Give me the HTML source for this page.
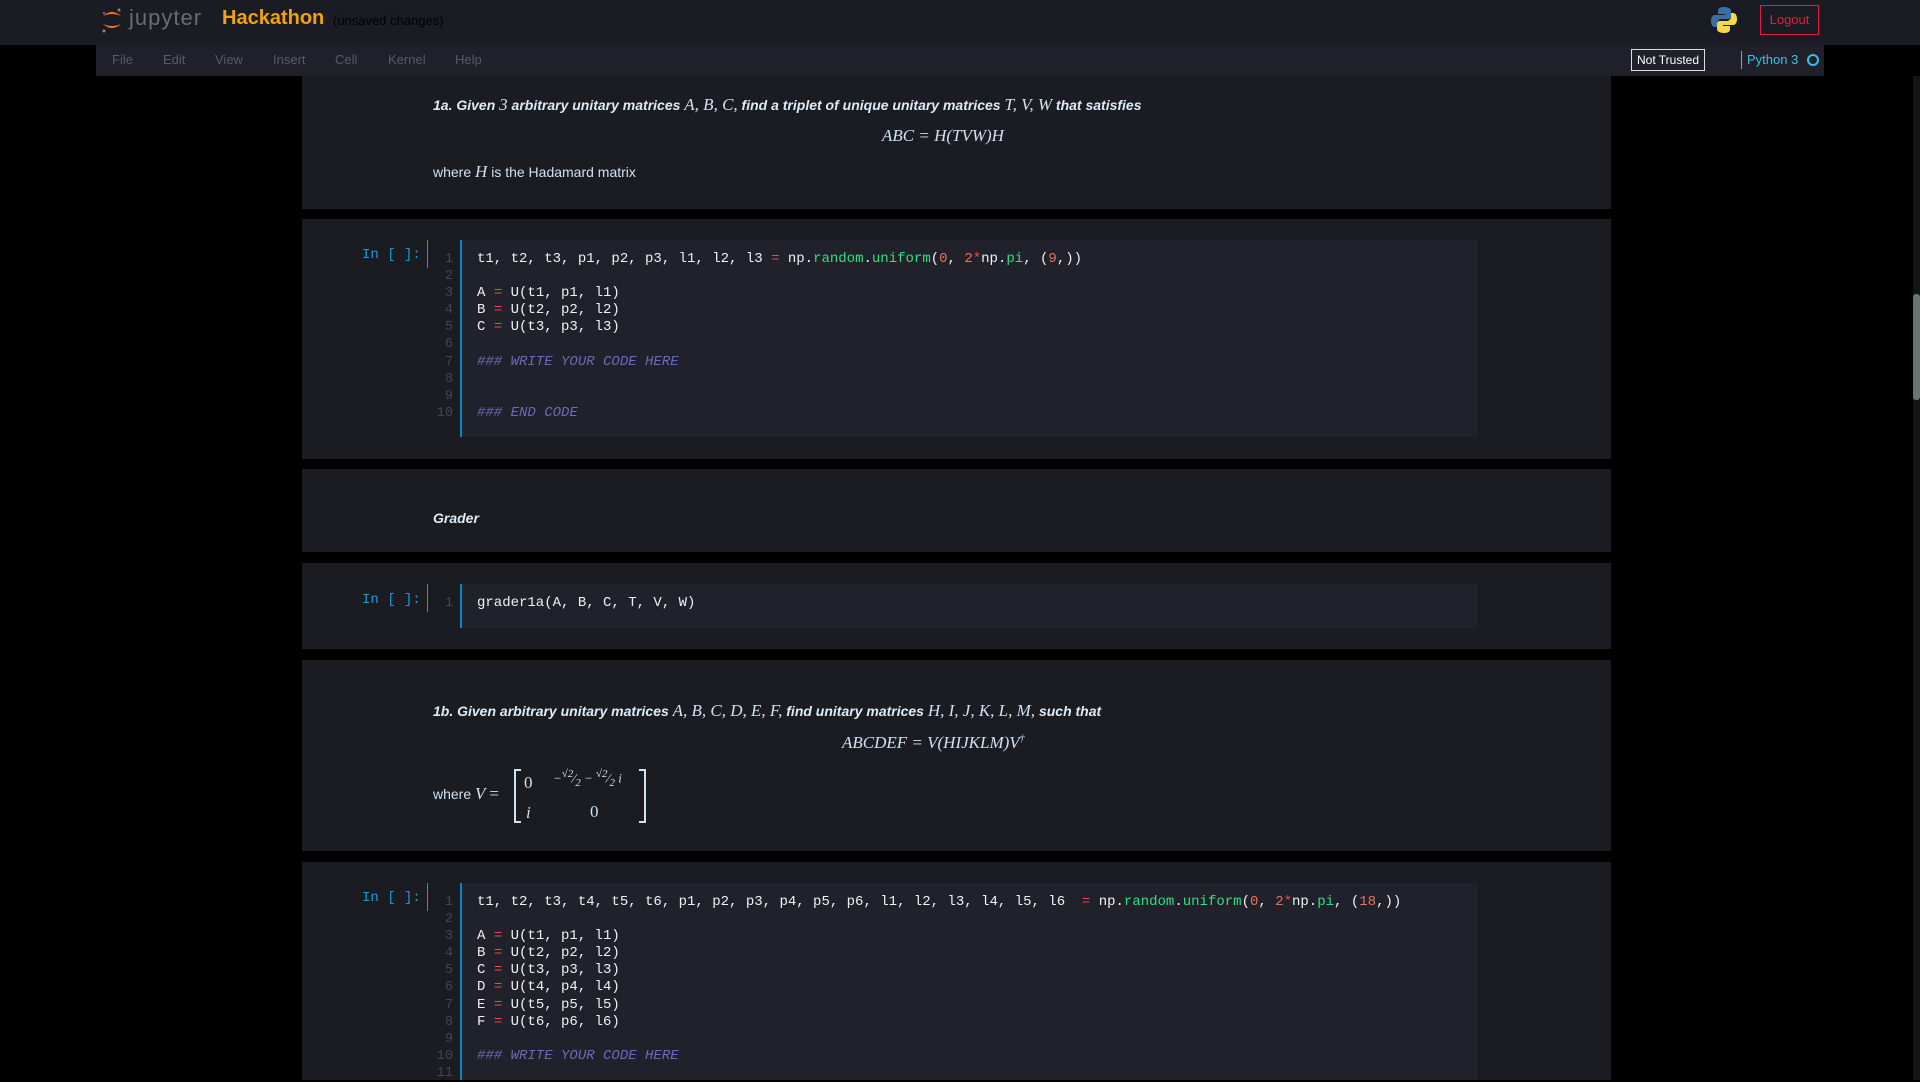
<!DOCTYPE html>
<html><head><meta charset="utf-8"><style>
*{margin:0;padding:0;box-sizing:border-box}
body{width:1920px;height:1080px;background:#000;overflow:hidden;position:relative;font-family:"Liberation Sans",sans-serif;color:#cfe2f3}
.abs{position:absolute}
#top{left:0;top:0;width:1920px;height:45px;background:#1b1b23}
#menu{left:96px;top:45px;width:1728px;height:31px;background:#20202a}
#menu span{position:absolute;top:7px;font-size:13px;color:#5a5a66}
.cell{position:absolute;left:302px;width:1309px;background:#1b1b22}
.md{position:absolute;left:433px;font-size:14px;white-space:nowrap}
.bi{font-weight:bold;font-style:italic;color:#dcebf8}
.m{font-family:"Liberation Serif",serif;font-style:italic;font-size:17px;color:#cfe2f3;font-weight:normal}
.code{position:absolute;left:460px;width:1018px;background:#21212b;border-left:2px solid #0d86c0}
.prompt{position:absolute;left:362px;font-family:"Liberation Mono",monospace;font-size:14px;color:#1a9bd7}
.pbar{position:absolute;left:427px;width:1px;background:#1a9bd7}
pre{position:absolute;font-family:"Liberation Mono",monospace;font-size:14px;line-height:17.1px;color:#f1f1f1}
.ln{color:#444456;text-align:right;width:20px;font-size:13.6px}
.o{color:#f0474c}.g{color:#2ee07e}.n{color:#e7735e}.c{color:#6a6ab8;font-style:italic}
</style></head><body>
<div id="top" class="abs"></div>
<svg class="abs" style="left:100px;top:6px" width="24" height="28" viewBox="0 0 24 28"><path d="M3 10 Q12 2 21 10 Q12 6 3 10Z" fill="#f37726"/><path d="M3 18 Q12 26 21 18 Q12 22 3 18Z" fill="#f37726"/><circle cx="19" cy="4" r="1.5" fill="#888"/><circle cx="4" cy="25" r="1.5" fill="#888"/><circle cx="4" cy="7" r="1" fill="#888"/></svg>
<div class="abs" style="left:129px;top:5px;font-size:22px;color:#6b6b72;letter-spacing:1px">jupyter</div>
<div class="abs" style="left:222px;top:7px;font-size:20px;font-weight:bold;color:#f0a30a">Hackathon</div>
<div class="abs" style="left:333px;top:13px;font-size:13px;color:#000">(unsaved changes)</div>
<svg class="abs" style="left:1709px;top:5px" width="30" height="30" viewBox="0 0 30 30"><path d="M15 2c-6 0-6 3-6 4v3h7v1H6c-3 0-4 3-4 6s1 6 4 6h2v-4c0-2 2-4 4-4h7c2 0 3-1 3-3V6c0-2-2-4-7-4z" fill="#3a6ea5"/><path d="M15 28c6 0 6-3 6-4v-3h-7v-1h10c3 0 4-3 4-6s-1-6-4-6h-2v4c0 2-2 4-4 4h-7c-2 0-3 1-3 3v5c0 2 2 4 7 4z" fill="#f5d849"/></svg>
<div class="abs" style="left:1760px;top:5px;width:59px;height:30px;border:1px solid #e0203c;color:#e0203c;font-size:13px;text-align:center;line-height:28px">Logout</div>
<div id="menu" class="abs"><span style="left:16px">File</span><span style="left:67px">Edit</span><span style="left:119px">View</span><span style="left:177px">Insert</span><span style="left:239px">Cell</span><span style="left:292px">Kernel</span><span style="left:359px">Help</span></div>
<div class="abs" style="left:1631px;top:49px;width:74px;height:22px;border:1px solid #ddd;color:#fff;font-size:12px;text-align:center;line-height:20px">Not Trusted</div>
<div class="abs" style="left:1741px;top:51px;width:1px;height:18px;background:#36c0e8"></div>
<div class="abs" style="left:1747px;top:52px;font-size:13px;color:#36c0e8">Python 3</div>
<div class="abs" style="left:1807px;top:54px;width:12px;height:12px;border:2px solid #36c0e8;border-radius:50%"></div>
<div class="abs" style="left:1913px;top:76px;width:7px;height:1004px;background:#141414"></div>
<div class="abs" style="left:1913px;top:294px;width:7px;height:106px;background:#6b7475;border-radius:3px"></div>

<div class="cell" style="top:76px;height:133px"></div>
<div class="md bi" style="top:95px">1a. Given <span class="m">3</span> arbitrary unitary matrices <span class="m">A, B, C,</span> find a triplet of unique unitary matrices <span class="m">T, V, W</span> that satisfies</div>
<div class="md m" style="top:126px;left:882px">ABC = H(TVW)H</div>
<div class="md" style="top:162px">where <span class="m">H</span> is the Hadamard matrix</div>

<div class="cell" style="top:219px;height:240px"></div>
<div class="prompt" style="top:247px">In [ ]:</div><div class="pbar" style="top:240px;height:28px"></div>
<div class="code" style="top:240px;height:197px"></div>
<pre class="ln" style="left:433px;top:251px">1
2
3
4
5
6
7
8
9
10</pre>
<pre style="left:477px;top:251px">t1, t2, t3, p1, p2, p3, l1, l2, l3 <span class="o">=</span> np.<span class="g">random</span>.<span class="g">uniform</span>(<span class="n">0</span>, <span class="n">2</span><span class="o">*</span>np.<span class="g">pi</span>, (<span class="n">9</span>,))

A <span class="o">=</span> U(t1, p1, l1)
B <span class="o">=</span> U(t2, p2, l2)
C <span class="o">=</span> U(t3, p3, l3)

<span class="c">### WRITE YOUR CODE HERE</span>


<span class="c">### END CODE</span></pre>

<div class="cell" style="top:469px;height:83px"></div>
<div class="md bi" style="top:510px">Grader</div>

<div class="cell" style="top:563px;height:86px"></div>
<div class="prompt" style="top:592px">In [ ]:</div><div class="pbar" style="top:584px;height:28px"></div>
<div class="code" style="top:584px;height:44px"></div>
<pre class="ln" style="left:433px;top:595px">1</pre>
<pre style="left:477px;top:595px">grader1a(A, B, C, T, V, W)</pre>

<div class="cell" style="top:660px;height:191px"></div>
<div class="md bi" style="top:701px">1b. Given arbitrary unitary matrices <span class="m">A, B, C, D, E, F,</span> find unitary matrices <span class="m">H, I, J, K, L, M,</span> such that</div>
<div class="md m" style="top:733px;left:842px">ABCDEF = V(HIJKLM)V<sup style="font-size:10px">†</sup></div>
<div class="md" style="top:784px">where <span class="m">V</span> <span class="m" style="font-style:normal">=</span></div>
<div class="abs" style="left:514px;top:769px;width:132px;height:54px;border:2px solid #cfe2f3;"></div>
<div class="abs" style="left:521px;top:764px;width:118px;height:64px;background:#1b1b22"></div>
<div class="md m" style="left:524px;top:773px;font-style:normal">0</div>
<div class="md m" style="left:553px;top:768px;font-size:13px">−<sup>√2</sup>⁄<sub>2</sub> − <sup>√2</sup>⁄<sub>2</sub> i</div>
<div class="md m" style="left:526px;top:803px">i</div>
<div class="md m" style="left:590px;top:802px;font-style:normal">0</div>

<div class="cell" style="top:862px;height:218px"></div>
<div class="prompt" style="top:890px">In [ ]:</div><div class="pbar" style="top:883px;height:28px"></div>
<div class="code" style="top:883px;height:197px"></div>
<pre class="ln" style="left:433px;top:894px">1
2
3
4
5
6
7
8
9
10
11</pre>
<pre style="left:477px;top:894px">t1, t2, t3, t4, t5, t6, p1, p2, p3, p4, p5, p6, l1, l2, l3, l4, l5, l6  <span class="o">=</span> np.<span class="g">random</span>.<span class="g">uniform</span>(<span class="n">0</span>, <span class="n">2</span><span class="o">*</span>np.<span class="g">pi</span>, (<span class="n">18</span>,))

A <span class="o">=</span> U(t1, p1, l1)
B <span class="o">=</span> U(t2, p2, l2)
C <span class="o">=</span> U(t3, p3, l3)
D <span class="o">=</span> U(t4, p4, l4)
E <span class="o">=</span> U(t5, p5, l5)
F <span class="o">=</span> U(t6, p6, l6)

<span class="c">### WRITE YOUR CODE HERE</span></pre>
</body></html>
